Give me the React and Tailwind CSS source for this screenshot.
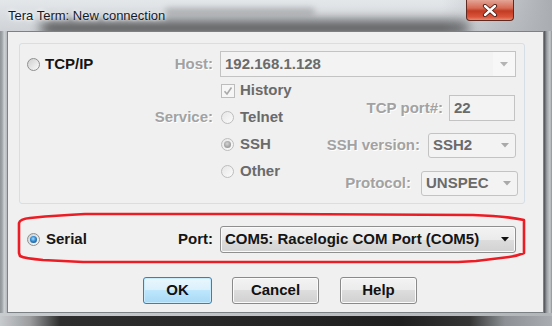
import React from "react"

function Radio({ checked, disabled, blue }) {
  return (
    <span
      className={`flex h-[13px] w-[13px] shrink-0 items-center justify-center rounded-full border ${
        disabled
          ? "border-[#bdbdbd] bg-[linear-gradient(135deg,#e6e6e6,#fbfbfb)]"
          : "border-[#8e8f8f] bg-[linear-gradient(135deg,#cfcfcf,#fafafa)]"
      }`}
    >
      {checked && (
        <span
          className={`h-[7px] w-[7px] rounded-full ${
            blue
              ? "bg-[radial-gradient(circle_at_45%_40%,#a6dcff_0%,#2f88d0_45%,#0b3b70_100%)]"
              : "bg-[radial-gradient(circle_at_45%_40%,#d6d6d6_0%,#a4a4a4_55%,#8c8c8c_100%)]"
          }`}
        />
      )}
    </span>
  )
}

function Checkbox() {
  return (
    <span className="flex h-[14px] w-[14px] shrink-0 items-center justify-center border border-[#bdbdbd] bg-[#f6f6f6]">
      <svg width="10" height="10" viewBox="0 0 10 10">
        <path d="M1.5 5.2 L4 8 L8.5 1.5" fill="none" stroke="#a9a9a9" strokeWidth="1.6" />
      </svg>
    </span>
  )
}

function Arrow({ color = "#a9a9a9" }) {
  return (
    <svg width="8" height="5" viewBox="0 0 8 5" className="shrink-0">
      <path d="M0 0 H8 L4 4.5 Z" fill={color} />
    </svg>
  )
}

function Box({ w, h, text, arrow, rounded }) {
  return (
    <div
      className={`flex items-center border border-[#c3c3c3] bg-[#f3f3f3] pl-[4px] pr-[6px] text-[15px] font-bold text-[#6a6a6a] ${
        rounded ? "rounded-[3px]" : ""
      }`}
      style={{ width: w, height: h }}
    >
      <span className="flex-1">{text}</span>
      {arrow && <Arrow />}
    </div>
  )
}

const label = "text-[15px] font-bold text-[#a2a2a2] [text-shadow:1px_1px_0_#ffffff]"
const option = "text-[15px] font-bold text-[#6a6a6a]"

function Button({ children, w, primary }) {
  return (
    <button
      className={`flex h-[27px] items-center justify-center rounded-[3px] border text-[15px] font-bold text-[#111] ${
        primary
          ? "border-[#3c7fb1] bg-[linear-gradient(180deg,#eaf6fd_0%,#d9f0fc_50%,#bee6fd_50%,#a7d9f5_100%)] shadow-[inset_0_0_0_1px_#c8ecfd]"
          : "border-[#8a8a8a] bg-[linear-gradient(180deg,#f3f3f3_0%,#ebebeb_50%,#dddddd_50%,#d0d0d0_100%)] shadow-[inset_0_0_0_1px_#fbfbfb]"
      }`}
      style={{ width: w }}
    >
      {children}
    </button>
  )
}

function TitleBar() {
  return (
    <div className="relative flex h-[31px] items-start overflow-hidden bg-[linear-gradient(180deg,#e4e7ea,#cfd3d7)]">
      <div className="absolute left-[40px] top-[20px] h-[16px] w-[430px] rounded-full bg-[#2b2b2b] opacity-70 blur-[6px]" />
      <div className="absolute left-[165px] top-[8px] h-[7px] w-[150px] rounded-full bg-[#6a6a6a] opacity-40 blur-[3px]" />
      <div className="absolute right-0 top-0 h-full w-[110px] bg-[linear-gradient(90deg,rgba(170,175,180,0),#a9adb2)]" />
      <span className="relative ml-[8px] mt-[8px] text-[13px] leading-[16px] text-[#141a28] [text-shadow:0_0_6px_#fff,0_0_3px_#fff]">
        Tera Term: New connection
      </span>
      <div className="relative ml-auto mr-[38px] flex h-[21px] w-[48px] items-center justify-center rounded-b-[4px] border border-t-0 border-[#5e2a22] bg-[linear-gradient(180deg,#e3a596_0%,#d66b55_40%,#c23b22_55%,#d9553b_85%,#e98a6c_100%)]">
        <svg width="16" height="13" viewBox="0 0 16 13">
          <path d="M3 2 L13 11 M13 2 L3 11" stroke="#4a1d17" strokeWidth="4.2" strokeLinecap="round" />
          <path d="M3 2 L13 11 M13 2 L3 11" stroke="#ffffff" strokeWidth="2.4" strokeLinecap="round" />
        </svg>
      </div>
    </div>
  )
}

function RedMark() {
  return (
    <svg
      className="pointer-events-none absolute left-0 top-0"
      width="552"
      height="326"
      viewBox="0 0 552 326"
    >
      <path
        d="M19 253 L19 223 Q20 219 30 218 L45 216.5 L68 215 L85 214 L276 214 L473 215 Q505 216 524 220 L524 253 Q517 256 509 257 L476 261 L458 262 L83 262 L43 260 Q25 258.5 20 256 Z"
        fill="none"
        stroke="#ec1c24"
        strokeWidth="2.6"
        strokeLinejoin="round"
      />
    </svg>
  )
}

export default function App() {
  return (
    <div className="relative h-[326px] w-[552px] overflow-hidden bg-[#b9bdc2] font-['Liberation_Sans',Arial,sans-serif]">
      <TitleBar />
      <div className="flex h-[282px]">
        <div className="w-[7px] bg-[linear-gradient(90deg,#8f9499,#9fa4a9_30%,#cdd1d4_60%,#b6babe)]" />
        <div className="h-[282px] w-[537px] overflow-hidden border border-[#7c8186] bg-[#f0f0f0]">
          <div className="ml-[11px] mt-[11px] h-[161px] w-[506px] rounded-[3px] border border-[#d5dfe5]">
            <div className="mt-[7px] flex h-[26px] items-center">
              <div className="flex w-[193px] items-center pl-[7px]">
                <Radio />
                <span className="ml-[5px] text-[15px] font-bold text-[#151515]">TCP/IP</span>
                <span className={`ml-auto ${label}`}>Host:</span>
              </div>
              <div className="ml-[7px] flex h-[26px] w-[296px] items-center border border-[#c3c3c3] bg-[#f3f3f3] pl-[4px] text-[15px] font-bold text-[#6a6a6a]">
                <span className="flex-1">192.168.1.128</span>
                <div className="flex h-full w-[22px] items-center justify-center bg-[#f7f7f7]">
                  <Arrow color="#b4b4b4" />
                </div>
              </div>
            </div>
            <div className="flex">
              <div className="flex w-[193px] flex-col">
                <div className="h-[27px]" />
                <div className={`flex h-[27px] items-center justify-end ${label}`}>Service:</div>
              </div>
              <div className="ml-[8px] flex flex-col">
                <div className="flex h-[27px] items-center">
                  <Checkbox />
                  <span className={`ml-[5px] ${option}`}>History</span>
                </div>
                <div className="flex h-[27px] items-center">
                  <Radio disabled />
                  <span className={`ml-[6px] ${option}`}>Telnet</span>
                </div>
                <div className="flex h-[27px] items-center">
                  <Radio disabled checked />
                  <span className={`ml-[6px] ${option}`}>SSH</span>
                </div>
                <div className="flex h-[27px] items-center">
                  <Radio disabled />
                  <span className={`ml-[6px] ${option}`}>Other</span>
                </div>
              </div>
              <div className="flex flex-1 flex-col items-end pr-[6px]">
                <div className="mr-[3px] mt-[18px] flex h-[26px] items-center gap-[6px]">
                  <span className={label}>TCP port#:</span>
                  <Box w={66} h={26} text="22" />
                </div>
                <div className="mr-[2px] mt-[12px] flex h-[25px] items-center gap-[8px]">
                  <span className={label}>SSH version:</span>
                  <Box w={88} h={25} text="SSH2" arrow rounded />
                </div>
                <div className="mt-[13px] flex h-[25px] items-center gap-[10px]">
                  <span className={label}>Protocol:</span>
                  <Box w={97} h={25} text="UNSPEC" arrow rounded />
                </div>
              </div>
            </div>
          </div>

          <div className="mt-[22px] flex h-[27px] items-center">
            <div className="flex w-[205px] items-center pl-[19px]">
              <Radio checked blue />
              <span className="ml-[6px] text-[15px] font-bold text-[#151515]">Serial</span>
              <span className="ml-auto text-[15px] font-bold text-[#151515]">Port:</span>
            </div>
            <div className="ml-[7px] flex h-[27px] w-[296px] items-center rounded-[3px] border border-[#8f8f8f] bg-[linear-gradient(180deg,#f3f3f3_0%,#ebebeb_50%,#dddddd_50%,#d2d2d2_100%)] pl-[4px] pr-[6px] text-[15px] font-bold text-[#151515] shadow-[inset_0_0_0_1px_#fafafa]">
              <span className="flex-1">COM5: Racelogic COM Port (COM5)</span>
              <Arrow color="#111111" />
            </div>
          </div>

          <div className="ml-[135px] mt-[24px] flex gap-[20px]">
            <Button w={69} primary>OK</Button>
            <Button w={87}>Cancel</Button>
            <div className="ml-[1px]">
              <Button w={77}>Help</Button>
            </div>
          </div>
        </div>
        <div className="w-[8px] bg-[linear-gradient(90deg,#4b4f53,#9ca0a4_35%,#c6cacd_75%,#8c9094)]" />
      </div>
      <div className="h-[3px] bg-[linear-gradient(90deg,#c9ccce,#b3b6b9)]" />
      <div className="h-[10px] bg-[linear-gradient(90deg,#c8cbce_0px,#9a9c9e_30px,#2e2e2e_60px,#1f1f1f_400px,#353535_470px,#8d9195_505px,#a9adb1_552px)]" />
      <RedMark />
    </div>
  )
}
